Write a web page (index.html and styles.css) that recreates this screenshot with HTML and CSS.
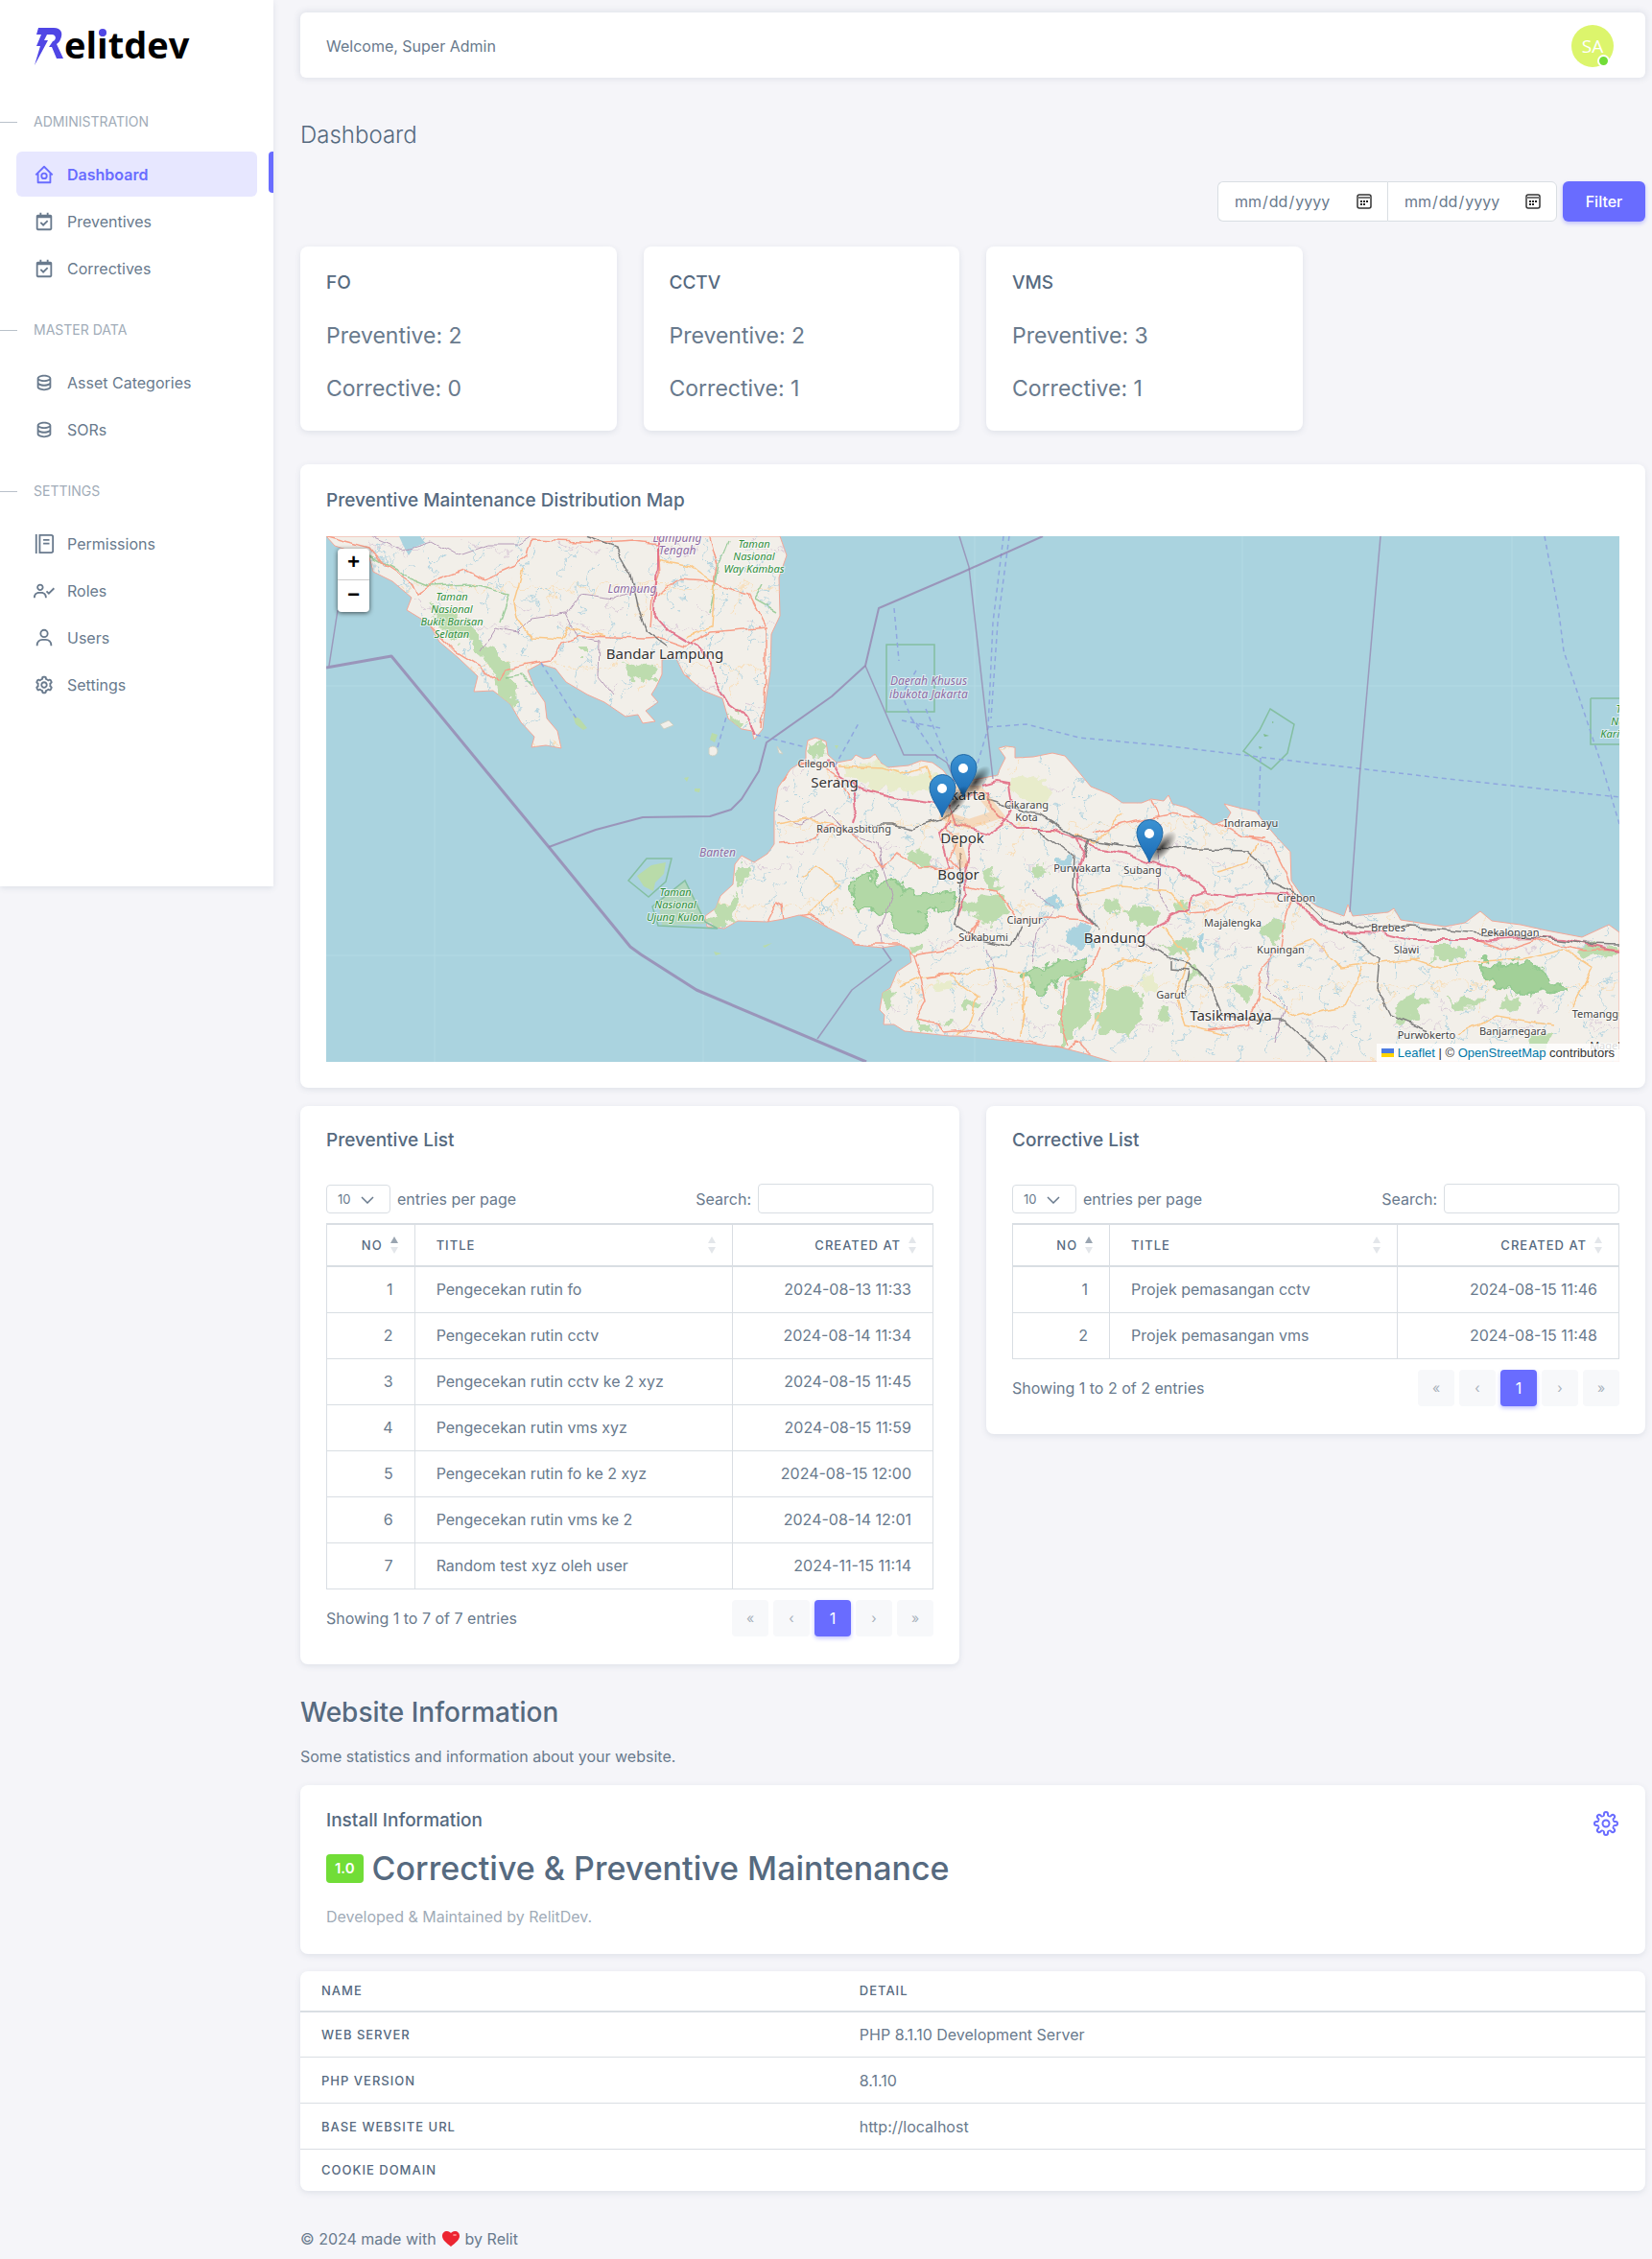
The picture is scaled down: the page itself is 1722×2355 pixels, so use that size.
FILE: index.html
```html
<!DOCTYPE html>
<html lang="en">
<head>
<meta charset="utf-8">
<title>Dashboard</title>
<meta name="viewport" content="width=device-width, initial-scale=1">
<link rel="stylesheet" href="styles.css">
</head>
<body>
<svg class="sprite" aria-hidden="true">
  <symbol id="i-home" viewBox="0 0 24 24"><path d="M2.500 12.500 12 3l9.500 9.500M5 10.500V21h14V10.500" fill="none" stroke="currentColor" stroke-width="2" stroke-linejoin="round"/><circle cx="12" cy="13.500" r="3" fill="none" stroke="currentColor" stroke-width="2"/></symbol>
  <symbol id="i-cal" viewBox="0 0 24 24"><path d="M19 4h-2V2h-2v2H9V2H7v2H5c-1.103 0-2 .897-2 2v14c0 1.103.897 2 2 2h14c1.103 0 2-.897 2-2V6c0-1.103-.897-2-2-2zm.002 16H5V8h14l.002 12z"/><path d="m11 17.414 5.707-5.707-1.414-1.414L11 14.586l-2.293-2.293-1.414 1.414z"/></symbol>
  <symbol id="i-data" viewBox="0 0 24 24"><path d="M20 17V7c0-2.168-3.663-4-8-4S4 4.832 4 7v10c0 2.168 3.663 4 8 4s8-1.832 8-4zM12 5c3.691 0 5.931 1.507 6 1.994C17.931 7.493 15.691 9 12 9S6.069 7.493 6 7.006C6.069 6.507 8.309 5 12 5zM6 9.607C7.479 10.454 9.637 11 12 11s4.521-.546 6-1.393v2.387c-.069.499-2.309 2.006-6 2.006s-5.931-1.507-6-2V9.607zM6 17v-2.393C7.479 15.454 9.637 16 12 16s4.521-.546 6-1.393v2.387c-.069.499-2.309 2.006-6 2.006s-5.931-1.507-6-2z"/></symbol>
  <symbol id="i-book" viewBox="0 0 24 24"><path d="M2 1h2v22H2z"/><path d="M7 2h13a2 2 0 0 1 2 2v16a2 2 0 0 1-2 2H7zM11 7.500h7M11 11.500h7" fill="none" stroke="currentColor" stroke-width="2"/></symbol>
  <symbol id="i-role" viewBox="0 0 24 24"><path d="M7.500 12c2.206 0 4-1.794 4-4s-1.794-4-4-4-4 1.794-4 4 1.794 4 4 4zm0-6c1.103 0 2 .897 2 2s-.897 2-2 2-2-.897-2-2 .897-2 2-2zm1.500 7H6c-3.309 0-6 2.691-6 6v1h2v-1c0-2.206 1.794-4 4-4h3c2.206 0 4 1.794 4 4v1h2v-1c0-3.309-2.691-6-6-6z"/><path d="m14.700 12.500 2.600 2.500 6-6" fill="none" stroke="currentColor" stroke-width="2"/></symbol>
  <symbol id="i-user" viewBox="0 0 24 24"><path d="M12 2a5 5 0 1 0 5 5 5 5 0 0 0-5-5zm0 8a3 3 0 1 1 3-3 3 3 0 0 1-3 3zm9 11v-1a7 7 0 0 0-7-7h-4a7 7 0 0 0-7 7v1h2v-1a5 5 0 0 1 5-5h4a5 5 0 0 1 5 5v1z"/></symbol>
  <symbol id="i-cog" viewBox="0 0 24 24"><path d="M12 16c2.206 0 4-1.794 4-4s-1.794-4-4-4-4 1.794-4 4 1.794 4 4 4zm0-6c1.084 0 2 .916 2 2s-.916 2-2 2-2-.916-2-2 .916-2 2-2z"/><path d="m2.845 16.136 1 1.730c.531.917 1.809 1.261 2.730.730l.529-.306A8.100 8.100 0 0 0 9 19.402V20c0 1.103.897 2 2 2h2c1.103 0 2-.897 2-2v-.598a8.132 8.132 0 0 0 1.896-1.111l.529.306c.923.530 2.198.188 2.731-.731l.999-1.729a2.001 2.001 0 0 0-.731-2.732l-.505-.292a7.718 7.718 0 0 0 0-2.224l.505-.292a2.002 2.002 0 0 0 .731-2.732l-.999-1.729c-.531-.920-1.808-1.265-2.731-.732l-.529.306A8.100 8.100 0 0 0 15 4.598V4c0-1.103-.897-2-2-2h-2c-1.103 0-2 .897-2 2v.598a8.132 8.132 0 0 0-1.896 1.111l-.529-.306c-.924-.531-2.200-.187-2.731.732l-.999 1.729a2.001 2.001 0 0 0 .731 2.732l.505.292a7.683 7.683 0 0 0 0 2.223l-.505.292a2.003 2.003 0 0 0-.731 2.733zm3.326-2.758A5.703 5.703 0 0 1 6 12c0-.462.058-.926.170-1.378a.999.999 0 0 0-.470-1.108l-1.123-.650.998-1.729 1.145.662a.997.997 0 0 0 1.188-.142 6.071 6.071 0 0 1 2.384-1.399A1 1 0 0 0 11 5.300V4h2v1.300a1 1 0 0 0 .708.956 6.083 6.083 0 0 1 2.384 1.399.999.999 0 0 0 1.188.142l1.144-.661 1 1.729-1.124.649a1 1 0 0 0-.470 1.108c.112.452.170.916.170 1.378 0 .461-.058.925-.171 1.378a1 1 0 0 0 .471 1.108l1.123.649-.998 1.729-1.145-.661a.996.996 0 0 0-1.188.142 6.071 6.071 0 0 1-2.384 1.399A1 1 0 0 0 13 18.700l.002 1.300H11v-1.300a1 1 0 0 0-.708-.956 6.083 6.083 0 0 1-2.384-1.399.992.992 0 0 0-1.188-.141l-1.144.662-1-1.729 1.124-.651a1 1 0 0 0 .471-1.108z"/></symbol>
</svg>

<div class="layout">
  <aside class="sidebar">
    <a class="brand" href="#" aria-label="Relitdev">
      <svg width="168" height="56" viewBox="0 0 168 56">
        <path d="M4 4H20C28 4 30 10 27 16 26 19 24 20 23 21L30 36H23L18 24H15L19 18C23 17 23 11 18 11H13L10 17H14L0 43 6 23H2L7 11H2Z" fill="#5046e5"/>
        <text x="31" y="36" class="brand-text">elitdev</text>
        <circle cx="71" cy="9" r="4" fill="#5046e5"/>
      </svg>
    </a>
    <nav>
      <h2 class="menu-label">ADMINISTRATION</h2>
      <ul class="menu">
        <li class="active"><a href="#"><svg class="icon"><use href="#i-home"/></svg>Dashboard</a></li>
        <li><a href="#"><svg class="icon"><use href="#i-cal"/></svg>Preventives</a></li>
        <li><a href="#"><svg class="icon"><use href="#i-cal"/></svg>Correctives</a></li>
      </ul>
      <h2 class="menu-label">MASTER DATA</h2>
      <ul class="menu">
        <li><a href="#"><svg class="icon"><use href="#i-data"/></svg>Asset Categories</a></li>
        <li><a href="#"><svg class="icon"><use href="#i-data"/></svg>SORs</a></li>
      </ul>
      <h2 class="menu-label">SETTINGS</h2>
      <ul class="menu">
        <li><a href="#"><svg class="icon"><use href="#i-book"/></svg>Permissions</a></li>
        <li><a href="#"><svg class="icon"><use href="#i-role"/></svg>Roles</a></li>
        <li><a href="#"><svg class="icon"><use href="#i-user"/></svg>Users</a></li>
        <li><a href="#"><svg class="icon"><use href="#i-cog"/></svg>Settings</a></li>
      </ul>
    </nav>
  </aside>

  <main class="content">
    <header class="navbar">
      <span>Welcome, Super Admin</span>
      <a class="avatar" href="#">SA</a>
    </header>

    <h1 class="page-title">Dashboard</h1>

    <form class="filter">
      <div class="range">
        <input type="date" aria-label="Start date">
        <input type="date" aria-label="End date">
      </div>
      <button type="submit" class="btn">Filter</button>
    </form>

    <section class="stats">
      <div class="card"><h2 class="card-title">FO</h2><p>Preventive: 2</p><p>Corrective: 0</p></div>
      <div class="card"><h2 class="card-title">CCTV</h2><p>Preventive: 2</p><p>Corrective: 1</p></div>
      <div class="card"><h2 class="card-title">VMS</h2><p>Preventive: 3</p><p>Corrective: 1</p></div>
    </section>

    <section class="card map-card">
      <h2 class="card-title">Preventive Maintenance Distribution Map</h2>
      <div class="map">
        <svg class="map-svg" viewBox="0 0 1348 548" preserveAspectRatio="xMidYMid slice">
          <defs>
            <path id="sumatra" d="M0 0 9 10 45 22 49 37 69 47 89 64 84 77 107 91 118 110 138 127 158 146 154 162 174 161 192 175 203 194 217 209 214 220 229 218 245 221 241 203 230 190 228 173 217 157 210 140 223 133 239 138 250 152 272 165 290 173 312 188 325 186 330 195 343 193 333 182 346 173 339 165 344 157 350 144 350 129 364 126 373 144 393 161 413 169 419 190 433 201 444 203 446 212 455 201 458 173 463 140 464 102 473 83 472 43 480 20 473 0Z"/>
            <path id="java" d="M500 232 500 224 502 213 510 210 521 214 523 228 532 236 548 233 552 228 560 232 567 231 572 227 578 236 585 241 607 239 620 234 632 236 643 244 650 253 665 256 680 253 700 249 702 243 708 231 701 221 708 219 718 220 718 231 737 230 757 226 770 229 783 244 797 261 817 269 830 278 850 278 860 274 873 276 878 270 882 279 897 283 913 293 925 301 939 295 943 288 936 279 955 284 969 287 975 295 991 314 1005 329 1006 359 1017 375 1033 386 1061 396 1065 384 1070 396 1088 394 1107 392 1113 388 1120 400 1166 407 1187 403 1203 391 1215 401 1245 405 1272 411 1309 418 1337 405 1348 413V548H819L793 540 766 533 720 527 660 521 650 521 603 516 592 509 581 509 582 499 577 494 580 476 588 471 595 454 610 444 608 431 598 426 580 429 550 426 548 421 535 414 515 404 503 398 493 395 477 399 460 402 429 401 415 409 397 407 395 396 406 388 411 375 424 363 426 342 433 333 446 340 460 331 467 321 467 287 471 262 484 243Z"/>
            <clipPath id="land"><use href="#sumatra"/><use href="#java"/></clipPath>
            <filter id="rough" filterUnits="userSpaceOnUse" x="0" y="0" width="1348" height="548"><feTurbulence type="fractalNoise" baseFrequency=".07" numOctaves="3" seed="4"/><feDisplacementMap in="SourceGraphic" scale="22" xChannelSelector="R" yChannelSelector="G"/></filter>
            <filter id="wiggle" filterUnits="userSpaceOnUse" x="0" y="0" width="1348" height="548"><feTurbulence type="fractalNoise" baseFrequency=".05" numOctaves="2" seed="9"/><feDisplacementMap in="SourceGraphic" scale="9" xChannelSelector="R" yChannelSelector="G"/></filter>
            <pattern id="terrain" width="97" height="83" patternUnits="userSpaceOnUse">
              <g fill="none" stroke-linejoin="round">
                <path d="M3 0 8 9 5 20 12 27 10 38 17 44M60 5 55 14 58 24 49 32 50 41M90 30 80 36 78 48 69 53 66 66M20 83 27 70 25 60 33 52M55 14 47 11M78 48 86 55 85 66M12 27 22 24 26 15M33 52 41 55 47 66M58 24 68 26 72 17M27 70 16 66M66 66 73 74 71 83" stroke="#9fcbdc"/>
                <path d="M0 50 11 53 21 48 33 56 46 50 59 57 74 52 86 58 97 50M46 50 43 64 38 72 36 83" stroke="#fad9aa"/>
                <path d="M97 12 86 16 75 10 64 15 56 8 46 6M15 74 6 77 0 70" stroke="#d3c1d3"/>
              </g>
            </pattern>
            <linearGradient id="pinfill" x2="0" y2="1"><stop offset="0" stop-color="#3b92d3"/><stop offset="1" stop-color="#1a6bb5"/></linearGradient>
            <radialGradient id="shade"><stop offset="0" stop-color="#000" stop-opacity=".75"/><stop offset="1" stop-color="#000" stop-opacity="0"/></radialGradient>
            <g id="pin"><ellipse cx="13" cy="-16" rx="21" ry="9" transform="rotate(-48 13 -16)" fill="url(#shade)"/><path d="M0 0C-3-10-13-20-13-31A13.500 13.500 0 0 1 14-31C14-20 3-10 0 0Z" fill="url(#pinfill)" stroke="#2269a5"/><circle cy="-30" r="5" fill="#fff"/></g>
          </defs>
          <rect width="1348" height="548" fill="#aad3df"/>
          <path d="M113 0V548M393 0V548M676 0V548M955 0V548M1236 0V548M0 156H1348M0 437H1348" stroke="#b3dae4"/>
          <g fill="#f2efe9" stroke="#f2a798"><use href="#sumatra"/><use href="#java"/></g>
          <g clip-path="url(#land)">
            <rect width="1348" height="548" fill="url(#terrain)" opacity=".75" filter="url(#rough)"/>
            <path d="M76 0 80 9 86 20 91 12 103 7 98 0Z" fill="#aad3df"/>
            <g filter="url(#rough)">
            <path d="M535 238 575 236 605 250 635 246 640 262 600 268 560 258ZM710 255 735 250 755 262 752 280 728 278 715 270ZM632 463 652 461 654 474 638 478ZM862 452 868 470 855 480 850 468Z" fill="#e8eccb"/>
            <g fill="#bddcae">
              <path d="M102 66 118 75 134 82 150 93 163 107 178 122 186 135 189 145 200 160 199 173 184 176 175 171 181 160 179 142 168 131 157 120 145 112 132 106 118 92Z"/>
              <path d="M310 135 327 129 343 132 344 146 328 150 315 143Z"/><path d="M420 188 432 186 436 195 428 202 420 197ZM264 115h8v6h-8zM504 214l10-1 5 7-3 10-10-2z"/>
              <path d="M428 370 411 384 399 396 394 404 414 409 424 398 429 382ZM427 345l10-2 3 12-8 12-7-5z"/>
              <path d="M606 334 620 325 633 333 628 345 612 342Z"/>
              <path d="M684 352 698 350 703 368 690 366ZM665 385 682 376 702 378 709 394 692 403 668 396ZM735 345 750 340 754 352 740 357Z"/>
              <path d="M776 461 802 465 797 490 787 515 770 510 772 481Z"/>
              <path d="M806 384 820 375 829 390 815 394ZM833 387 850 382 868 393 860 407 840 400ZM820 470 851 477 850 500 835 521 803 517 802 502ZM765 489h12v40l-12 2z"/>
              <path d="M870 424 905 416 902 431 878 434ZM884 381l9-2 4 10-8 4-7-4zM900 450l12 1-2 11-10-1zM945 470l20-3-3 17-17-4zM869 494l9 6-2 9-8-8z"/>
              <path d="M972 404 997 400 990 425 975 420ZM1114 496 1132 478 1148 482 1138 500 1120 507ZM1170 480l40 2 4 6-38 2zM1152 425l25 0 14 9-14 10-24-3zM1230 480l16 2-8 12-14-3zM1310 425l36 3-4 12-32-4zM1255 520l24 3-5 12-20-4z"/>
              <path d="M578 473 590 475 588 492 580 500ZM618 508l15 0-2 10-15-2zM645 504l10 3-3 6-9-1zM612 427l8 2-2 8-9-1zM670 482l12 4-8 8-10-4z"/>
            </g>
            <g fill="#b2d8a6" stroke="#93ca90" stroke-width="2">
              <path d="M556 349 568 352 578 362 595 358 602 371 622 374 640 371 654 369 654 382 640 392 626 388 618 392 626 406 618 415 600 413 590 404 592 394 572 390 555 395 546 386 552 372 548 362Z"/>
              <path d="M726 456 742 452 755 447 762 441 778 440 790 444 783 461 764 462 750 472 738 477Z"/>
              <path d="M1202 445 1226 447 1250 442 1270 455 1290 468 1293 476 1272 474 1250 480 1225 471 1208 463Z" fill="#a2d098"/>
            </g>
            <g fill="#aad3df"><path d="M762 335l14 2-4 10-10-3zM750 378l16-2 4 8-8 8-6-6zM770 415l18-8 8 10 6 14-20 0zM907 416l9-2-2 20-6-6z"/></g>
            </g>
            <g filter="url(#wiggle)">
            <g fill="none" stroke="#b59ab8" stroke-width="1"><path d="M45 0 80 15 110 6 135 20 170 8 200 8 214 0M160 120 175 95 200 100 215 85 250 80 262 105 285 110 284 145 300 165M250 80 265 60 300 65 330 55M472 290 495 300 520 285 545 310 575 320 580 345 590 375 577 410 580 430M738 370 760 390 740 415 735 445M690 430 700 470 680 505M870 300 865 370 880 395M985 435 980 470 1000 490 990 530"/></g>
            <g fill="none" stroke="#8cc58c" stroke-width="1.500" stroke-opacity=".8"><path d="M45 20 80 40 110 52 150 50 190 60 180 90M455 50 447 65 470 78M400 80 410 30 420 5M217 157 205 145 186 148"/></g>
            <g fill="none" stroke="#fbc887" stroke-width="1.500"><path d="M205 35 195 70 198 85 215 105 245 107 252 95 290 105M344 25 380 32 405 50 402 95 375 105M470 300 500 295 530 300M495 355 510 345 535 362 510 385 500 395M532 240 580 242 600 248 625 240 635 262M600 470 620 460 650 457 690 450 726 456 728 500 725 522M650 458 680 480 670 510 657 520M725 520 730 480M800 515 812 480 812 450 830 440 860 445M780 375 830 365 880 370 900 395M870 405 900 440 885 480 895 510 940 520M830 290 800 320 780 310M930 350 960 340 970 320M975 480 1010 500 1060 490 1080 450M1130 440 1160 450 1200 445 1250 440 1290 430 1320 450 1300 490M1180 520 1220 500 1280 510M1000 430 1030 420 1060 450 1100 445 1140 440"/></g>
            <g fill="none" stroke="#f79e88" stroke-width="1.500"><path d="M0 0 45 12 60 30 90 50 95 62 118 45 145 35 165 45 195 32 210 20 215 4 240 5 290 7 320 5 345 8 347 40 340 65 338 95M107 91 135 120 160 135 180 150 186 140 205 135 235 130 245 112 265 105 330 107 350 106 375 115 400 100 460 95M400 0 408 30 405 50 440 60 458 95 458 150 455 200M345 63 370 45 405 48M375 145 400 170M470 262 485 240 510 235 532 250 545 275M471 320 500 318 528 300 545 310 570 330 580 345 595 330 620 347 655 345M460 402 470 382 475 385 477 399 503 395 550 425 600 425 612 438 620 460 625 485 615 503 640 508 645 518 680 515 720 525 775 535 782 527 800 545M612 437 655 430 680 400 670 420M668 365 700 372 720 400 750 397 790 400 800 405M625 460 660 455M775 530 765 505 772 465 800 445 806 428M800 310 830 300 880 290 925 296 955 313 980 315M960 314 985 320 1000 350 1008 370 1000 395 995 430 975 450 972 480 960 510 920 515M860 275 868 295M945 380 925 390 900 392M640 262 650 285 645 300 656 320 650 335 660 347M1348 430 1310 432 1260 420 1230 430 1200 420"/></g>
            <g fill="none" stroke="#e2647f" stroke-width="2" stroke-opacity=".85"><path d="M345 0 345 30 342 80 360 100 385 115 403 130 405 150 420 175 440 190 448 207M523 232 535 250 555 262 590 272 630 277 650 280M550 262 553 285 548 300M650 285 655 300 690 310 710 295 715 285M685 260 700 256 712 258 715 280M668 270 690 268 692 285 720 305 760 305 790 318 800 325 830 330 860 340 885 348 905 360 920 372 945 375 980 371 1000 372 1015 385 1035 406 1060 412 1100 414 1130 421 1200 421 1250 418 1290 420 1348 432M780 312 790 330 782 350 785 385 800 405M850 418 870 403 900 388 902 375 918 370M672 320 665 350 668 372 655 400M650 295 640 310 650 345"/></g>
            <g fill="none" stroke="#7d7d7d" stroke-width="1.500"><path d="M270 0 302 12 318 40 325 75 335 100 355 115M570 300 590 300 610 305 640 296 660 280M690 275 730 287 745 290 780 312 796 317 850 325 960 327 975 340 985 360 1010 372 1040 400 1060 403 1080 408 1130 407 1200 414 1260 418 1310 424 1348 425M740 305 780 335 778 365 790 390 806 412M796 317 790 335M660 330 662 370 655 405 680 420 715 428 725 405M850 425 880 440 900 445 920 465 935 500 980 505 1000 505 1045 548M880 442 880 450 900 452 895 480M1060 412 1098 440 1095 470 1110 500 1148 515"/></g>
            </g>
            <path d="M630 265 680 265 700 290 670 300 640 290M655 310 665 345" stroke="#fbb36b" stroke-opacity=".35" stroke-width="10" fill="none"/>
          </g>
          <g fill="#f2efe9" stroke="#cbd0c4" stroke-width="1"><path d="M348 196 357 192 362 197 352 201ZM399 221a5 5 0 1 1 0 6zM470 219l6 8-4-1z"/></g>
          <g fill="#b9dba9"><path d="M257 187 264 190 272 200 268 202 260 196ZM402 205l6 2-3 8-5-3zM324 354 339 343 354 340 352 352 343 361 341 370 331 365ZM373 252l5-1-2 5zM384 263l6 0-1 4-5-1zM530 218h4l-2 4zM404 433l8 2-6 2zM455 427l10-3-8 5z"/>
            <path d="M346 380 374 360 388 384 396 404 350 406Z" opacity=".6"/></g>
          <g fill="none" stroke="#84bfa1" stroke-width="1.500"><path d="M315 359 334 336 360 336 354 360 336 376ZM340 386 374 359 395 402 408 409 346 406ZM584 113h50v70h-50zM984 180 1009 196 1002 226 985 243 956 224 973 202ZM1318 169h30M1348 217h-30v-48"/></g>
          <g fill="#7fbc8d"><path d="M977 206l6 2-5 1zM972 219l4 1-3 2zM986 193l2 1-2 1z"/></g>
          <g fill="none" stroke="#8fa7df" stroke-width="1.500" stroke-dasharray="5 4"><path d="M224 132 262 192M408 220 418 185M448 207 500 220M592 75 597 130M530 240 555 195M615 140 600 165 610 190 620 200M610 190 640 235M625 180 650 240M600 192 640 200M706 0 695 90 690 200 678 240M712 0 700 90 693 190M690 199 730 196 785 210 880 219 980 231 1170 253 1348 272M974 231 972 290M1270 0 1285 80 1290 120 1310 180 1330 240 1348 300"/></g>
          <g fill="none" stroke="#9480ad" stroke-opacity=".75" stroke-linejoin="round"><path d="M0 137 68 125 232 324 317 428 328 436 386 473 563 548" stroke-width="3"/><path d="M232 324 281 306 330 293 400 292 422 285 433 274 451 245 459 215 527 167 562 135 576 75 660 39 747 0" stroke-width="2"/><path d="M562 135 583 184 602 228 635 228 647 236 655 255M12 77 3 135M660 0 670 32 695 253M1099 0 1077 253 1067 392M580 429 589 442 548 473 512 524" stroke-width="1.500" stroke-opacity=".7"/></g>
          <g class="lbl nature"><text x="446" y="12">Taman</text><text x="446" y="25">Nasional</text><text x="446" y="38">Way Kambas</text><text x="131" y="67">Taman</text><text x="131" y="80">Nasional</text><text x="131" y="93">Bukit Barisan</text><text x="131" y="106">Selatan</text><text x="364" y="375">Taman</text><text x="364" y="388">Nasional</text><text x="364" y="401">Ujung Kulon</text><text x="1361" y="184">Taman</text><text x="1361" y="197">Nasional</text><text x="1361" y="210">Karimunjawa</text></g>
          <g class="lbl region"><text x="366" y="6">Lampung</text><text x="366" y="19">Tengah</text><text x="319" y="59">Lampung</text><text x="408" y="334">Banten</text><text x="628" y="155">Daerah Khusus</text><text x="628" y="169">ibukota Jakarta</text></g>
          <g class="lbl city"><text x="353" y="128">Bandar Lampung</text><text x="530" y="262">Serang</text><text x="663" y="275">Jakarta</text><text x="663" y="320">Depok</text><text x="659" y="358">Bogor</text><text x="822" y="424">Bandung</text><text x="943" y="505">Tasikmalaya</text></g>
          <g class="lbl town"><text x="511" y="241">Cilegon</text><text x="550" y="309">Rangkasbitung</text><text x="730" y="284">Cikarang</text><text x="730" y="297">Kota</text><text x="788" y="350">Purwakarta</text><text x="851" y="352">Subang</text><text x="728" y="404">Cianjur</text><text x="685" y="422">Sukabumi</text><text x="880" y="482">Garut</text><text x="964" y="303">Indramayu</text><text x="1011" y="381">Cirebon</text><text x="945" y="407">Majalengka</text><text x="995" y="435">Kuningan</text><text x="1107" y="412">Brebes</text><text x="1126" y="435">Slawi</text><text x="1234" y="417">Pekalongan</text><text x="1333" y="502">Temanggung</text><text x="1237" y="520">Banjarnegara</text><text x="1147" y="524">Purwokerto</text><text x="1343" y="535">Magelang</text></g>
          <use href="#pin" x="664" y="272"/><use href="#pin" x="642" y="293"/><use href="#pin" x="858" y="340"/>
        </svg>
        <div class="zoom">
          <button type="button" aria-label="Zoom in">+</button>
          <button type="button" aria-label="Zoom out">−</button>
        </div>
        <div class="attribution">
          <svg width="13" height="9" viewBox="0 0 13 9"><path d="M0 0h13v5H0z" fill="#4c7be1"/><path d="M0 5h13v4H0z" fill="#ffd500"/></svg>
          <a href="#">Leaflet</a> | © <a href="#">OpenStreetMap</a> contributors
        </div>
      </div>
    </section>

    <section class="lists">
      <div class="card">
        <h2 class="card-title">Preventive List</h2>
        <div class="tools">
          <label class="length"><select><option>10</option></select>entries per page</label>
          <label class="search">Search:<input type="search"></label>
        </div>
        <table class="grid">
          <colgroup><col class="col-no"><col class="col-title"><col></colgroup>
          <thead><tr><th class="num asc">NO<i class="sort"></i></th><th>TITLE<i class="sort"></i></th><th class="num">CREATED AT<i class="sort"></i></th></tr></thead>
          <tbody>
            <tr><td class="num">1</td><td>Pengecekan rutin fo</td><td class="num">2024-08-13 11:33</td></tr>
            <tr><td class="num">2</td><td>Pengecekan rutin cctv</td><td class="num">2024-08-14 11:34</td></tr>
            <tr><td class="num">3</td><td>Pengecekan rutin cctv ke 2 xyz</td><td class="num">2024-08-15 11:45</td></tr>
            <tr><td class="num">4</td><td>Pengecekan rutin vms xyz</td><td class="num">2024-08-15 11:59</td></tr>
            <tr><td class="num">5</td><td>Pengecekan rutin fo ke 2 xyz</td><td class="num">2024-08-15 12:00</td></tr>
            <tr><td class="num">6</td><td>Pengecekan rutin vms ke 2</td><td class="num">2024-08-14 12:01</td></tr>
            <tr><td class="num">7</td><td>Random test xyz oleh user</td><td class="num">2024-11-15 11:14</td></tr>
          </tbody>
        </table>
        <div class="pager">
          <span>Showing 1 to 7 of 7 entries</span>
          <div class="pages"><button disabled>«</button><button disabled>‹</button><button class="current">1</button><button disabled>›</button><button disabled>»</button></div>
        </div>
      </div>
      <div class="card">
        <h2 class="card-title">Corrective List</h2>
        <div class="tools">
          <label class="length"><select><option>10</option></select>entries per page</label>
          <label class="search">Search:<input type="search"></label>
        </div>
        <table class="grid grid-short">
          <colgroup><col class="col-no"><col class="col-title"><col></colgroup>
          <thead><tr><th class="num asc">NO<i class="sort"></i></th><th>TITLE<i class="sort"></i></th><th class="num">CREATED AT<i class="sort"></i></th></tr></thead>
          <tbody>
            <tr><td class="num">1</td><td>Projek pemasangan cctv</td><td class="num">2024-08-15 11:46</td></tr>
            <tr><td class="num">2</td><td>Projek pemasangan vms</td><td class="num">2024-08-15 11:48</td></tr>
          </tbody>
        </table>
        <div class="pager">
          <span>Showing 1 to 2 of 2 entries</span>
          <div class="pages"><button disabled>«</button><button disabled>‹</button><button class="current">1</button><button disabled>›</button><button disabled>»</button></div>
        </div>
      </div>
    </section>

    <h2 class="section-title">Website Information</h2>
    <p class="section-sub">Some statistics and information about your website.</p>

    <section class="card install">
      <div>
        <h3 class="card-title">Install Information</h3>
        <p class="product"><span class="badge">1.0</span>Corrective &amp; Preventive Maintenance</p>
        <p class="muted">Developed &amp; Maintained by RelitDev.</p>
      </div>
      <a href="#" class="gear" aria-label="Settings">
        <svg width="28" height="28" viewBox="-14 -14 28 28" fill="none" stroke="currentColor" stroke-width="2">
          <defs><path id="tooth" d="M-3.400-8.200C-2.300-7.700-2-8.600-2-9.500V-10a2 2 0 0 1 4 0v.5C2-8.600 2.300-7.700 3.400-8.200"/></defs>
          <use href="#tooth"/><use href="#tooth" transform="rotate(45)"/><use href="#tooth" transform="rotate(90)"/><use href="#tooth" transform="rotate(135)"/><use href="#tooth" transform="rotate(180)"/><use href="#tooth" transform="rotate(225)"/><use href="#tooth" transform="rotate(270)"/><use href="#tooth" transform="rotate(315)"/>
          <circle r="3.500"/>
        </svg>
      </a>
    </section>

    <section class="card info">
      <table>
        <colgroup><col class="col-name"><col></colgroup>
        <thead><tr><th>NAME</th><th>DETAIL</th></tr></thead>
        <tbody>
          <tr><th>WEB SERVER</th><td>PHP 8.1.10 Development Server</td></tr>
          <tr><th>PHP VERSION</th><td>8.1.10</td></tr>
          <tr><th>BASE WEBSITE URL</th><td>http://localhost</td></tr>
          <tr class="last"><th>COOKIE DOMAIN</th><td></td></tr>
        </tbody>
      </table>
    </section>

    <footer class="footer">© 2024 made with
      <svg width="18" height="16" viewBox="0 0 18 16" role="img" aria-label="love"><path d="M9 16C4 12 0 9 0 5 0 2 2 0 5 0c2 0 3 1 4 2 1-1 2-2 4-2 3 0 5 2 5 5 0 4-4 7-9 11Z" fill="#ec2531"/><ellipse cx="13" cy="4" rx="2" ry="1" fill="#ff8a8a"/></svg>
      by Relit</footer>
  </main>
</div>
</body>
</html>
```
FILE: styles.css
```css
*, *::before, *::after { box-sizing: border-box; }
body {
  margin: 0;
  background: #f5f5f9;
  color: #697a8d;
  font: 16px/24px Inter, "Noto Sans", sans-serif;
}
h1, h2, h3, p, ul { margin: 0; padding: 0; font-weight: 400; }
ul { list-style: none; }
a { color: inherit; text-decoration: none; }
button, input, select { font: inherit; color: inherit; }
.sprite { display: none; }

.layout { display: flex; align-items: flex-start; }

/* Sidebar */
.sidebar {
  flex: 0 0 285px;
  height: 924px;
  background: #fff;
  box-shadow: 0 2px 6px rgba(67, 89, 113, .12);
}
.brand { display: block; height: 86px; padding: 25px 0 0 36px; }
.brand svg { display: block; }
.brand-text { font: 700 38px "Open Sans", "Noto Sans", sans-serif; fill: #000; }
.menu-label {
  display: flex;
  align-items: center;
  height: 72px;
  padding-top: 31px;
  padding-bottom: 21px;
  font-size: 14px;
  line-height: 20px;
  color: #a1acb8;
}
.menu-label::before { content: ""; width: 18px; height: 1px; margin-right: 17px; background: #b9c1ca; }
.menu { display: grid; gap: 2px; }
.menu li { padding: 0 17px; }
.menu a { display: flex; align-items: center; gap: 13px; height: 47px; padding-left: 18px; border-radius: 6px; }
.icon { width: 22px; height: 22px; fill: currentColor; }
.menu .active { position: relative; }
.menu .active::after {
  content: "";
  position: absolute;
  right: 0;
  top: 0;
  width: 5px;
  height: 43px;
  border-radius: 4px 0 0 4px;
  background: #696cff;
}
.menu .active a { background: #e7e7ff; color: #696cff; font-weight: 600; }

/* Main column */
.content { flex: 1; min-width: 0; padding: 13px 7px 0 28px; }
.card { background: #fff; border-radius: 8px; box-shadow: 0 2px 6px rgba(67, 89, 113, .12); padding: 27px; }
.card-title { font-size: 19px; line-height: 22px; font-weight: 500; color: #566a7f; }
.navbar {
  display: flex;
  align-items: center;
  justify-content: space-between;
  height: 68px;
  padding: 1px 33px 0 27px;
  background: #fff;
  border-radius: 6px;
  box-shadow: 0 0 6px 2px rgba(67, 89, 113, .1);
}
.avatar {
  position: relative;
  width: 44px;
  height: 44px;
  border-radius: 50%;
  background: #dcf56c;
  color: #fff;
  font: 19px/44px "Open Sans", sans-serif;
  text-align: center;
}
.avatar::after {
  content: "";
  position: absolute;
  right: 4px;
  bottom: 0;
  width: 13px;
  height: 13px;
  border: 2px solid #fff;
  border-radius: 50%;
  background: #71dd37;
}
.page-title { margin-top: 42px; font-size: 24px; line-height: 36px; font-weight: 300; color: #566a7f; }

.filter { display: flex; justify-content: flex-end; gap: 6px; margin-top: 30px; }
.range { display: flex; }
.range input { width: 177px; height: 42px; padding: 0 16px; border: 1px solid #d9dee3; background: #fff; }
.range input:first-child { border-radius: 6px 0 0 6px; border-right: 0; }
.range input:last-child { border-radius: 0 6px 6px 0; }
.range input::-webkit-calendar-picker-indicator {
  width: 16px;
  height: 16px;
  padding: 0;
  background: url("data:image/svg+xml,%3Csvg xmlns='http://www.w3.org/2000/svg' viewBox='0 0 16 16'%3E%3Crect x='1' y='1' width='14' height='14' rx='2' fill='none' stroke='%23333' stroke-width='1.500'/%3E%3Cpath d='M1 3h14v2H1z' fill='%23777'/%3E%3Cpath d='M4 7h2v2H4zm3 0h2v2H7zm3 0h2v2h-2zM4 10h2v2H4zm3 0h2v2H7z' fill='%23222'/%3E%3C/svg%3E") no-repeat center / 16px 16px;
}
.btn {
  width: 86px;
  border: 0;
  border-radius: 6px;
  background: #696cff;
  color: #fff;
  font-weight: 500;
  box-shadow: 0 2px 4px rgba(105, 108, 255, .4);
}

.stats { display: grid; grid-template-columns: repeat(4, 1fr); gap: 28px; margin-top: 26px; }
.stats .card { height: 192px; }
.stats p { margin-top: 19px; font-size: 23px; line-height: 36px; }
.stats .card-title { margin-bottom: 26px; }

/* Map */
.map-card { margin-top: 35px; }
.map { position: relative; height: 548px; margin-top: 26px; overflow: hidden; }
.map-svg { display: block; width: 100%; height: 100%; }
.lbl { font-family: "Noto Sans", sans-serif; text-anchor: middle; paint-order: stroke; stroke: rgba(255, 255, 255, .6); stroke-width: 2px; }
.town { font-size: 11px; fill: #444; }
.city { font-size: 15px; fill: #333; }
.nature { font-size: 11px; font-style: italic; fill: #2f8f3c; }
.region { font-size: 12px; font-style: italic; fill: #8d6ba3; }
.zoom {
  position: absolute;
  left: 12px;
  top: 13px;
  display: grid;
  border-radius: 4px;
  background: #fff;
  box-shadow: 0 1px 5px rgba(0, 0, 0, .65);
}
.zoom button { width: 33px; height: 33px; padding: 0; border: 0; background: none; color: #000; font: 700 22px/32px "Liberation Mono", monospace; }
.zoom button:first-child { border-bottom: 1px solid #ccc; }
.attribution {
  position: absolute;
  right: 0;
  bottom: 0;
  padding: 0 5px;
  background: rgba(255, 255, 255, .8);
  color: #333;
  font: 13px/19px "Liberation Sans", sans-serif;
}
.attribution a { color: #0078a8; }

/* Lists */
.lists { display: grid; grid-template-columns: 1fr 1fr; align-items: start; gap: 28px; margin-top: 19px; }
.lists .card { padding-top: 25px; padding-bottom: 29px; }
.tools { display: flex; justify-content: space-between; align-items: center; margin-top: 34px; }
.length, .search { display: flex; align-items: center; gap: 7px; }
.length select {
  appearance: none;
  width: 67px;
  height: 30px;
  padding: 0 11px;
  border: 1px solid #d9dee3;
  border-radius: 4px;
  background: #fff url("data:image/svg+xml,%3Csvg xmlns='http://www.w3.org/2000/svg' width='14' height='8' fill='none' stroke='%23697a8d' stroke-width='1.500'%3E%3Cpath d='M1 1l6 6 6-6'/%3E%3C/svg%3E") no-repeat 35px 11px;
  font-size: 13px;
}
.search input { width: 183px; height: 31px; border: 1px solid #d9dee3; border-radius: 4px; background: #fff; }
table { width: 100%; border-collapse: collapse; table-layout: fixed; }
th { font-size: 13px; font-weight: 500; letter-spacing: 1px; text-align: left; color: #566a7f; }
.grid { margin-top: 10px; }
.grid th, .grid td { height: 48px; padding: 0 22px; border: 1px solid #d9dee3; }
.grid th { position: relative; height: 44px; border-top-width: 2px; border-bottom-width: 2px; }
.grid .num { text-align: right; }
.grid th.num { padding-right: 33px; }
.col-no { width: 14.5%; }
.col-title { width: 52.5%; }
.grid-short .col-no { width: 16%; }
.grid-short .col-title { width: 47.5%; }
.sort { position: absolute; right: 17px; top: 12px; display: grid; gap: 4px; }
.sort::before, .sort::after { content: ""; border: 4px solid transparent; }
.sort::before { border-top: 0; border-bottom: 7px solid #e3e6ea; }
.sort::after { border-bottom: 0; border-top: 7px solid #e3e6ea; }
.asc .sort::before { border-bottom-color: #9aa5b1; }
.pager { display: flex; justify-content: space-between; align-items: center; margin-top: 11px; }
.pages { display: flex; gap: 5px; }
.pages button { width: 38px; height: 38px; padding: 0; border: 0; border-radius: 4px; background: #f7f8fa; color: #a8b1bb; font-size: 14px; }
.pages .current { background: #696cff; color: #fff; font-size: 16px; box-shadow: 0 2px 4px rgba(105, 108, 255, .4); }

/* Website information */
.section-title { margin-top: 32px; font-size: 28px; line-height: 36px; font-weight: 500; color: #566a7f; }
.section-sub { margin-top: 16px; }
.install { display: flex; justify-content: space-between; height: 176px; margin-top: 18px; padding-top: 26px; }
.product { display: flex; align-items: center; gap: 9px; margin-top: 19px; font-size: 34px; line-height: 40px; font-weight: 500; color: #566a7f; }
.badge { height: 30px; padding: 0 9px; border-radius: 4px; background: #71dd37; color: #fff; font-size: 15px; line-height: 30px; font-weight: 600; }
.muted { margin-top: 18px; color: #a1acb8; }
.gear { color: #696cff; }
.info { margin-top: 18px; padding: 0; }
.col-name { width: 40%; }
.info th, .info td { height: 48px; padding: 0 22px; border-top: 1px solid #d9dee3; }
.info thead th { height: 42px; border-top: 0; border-bottom: 2px solid #d9dee3; }
.info .last th { height: 43px; }
.info .last td { height: 43px; }
.footer { display: flex; align-items: center; gap: 6px; margin-top: 38px; }
```
